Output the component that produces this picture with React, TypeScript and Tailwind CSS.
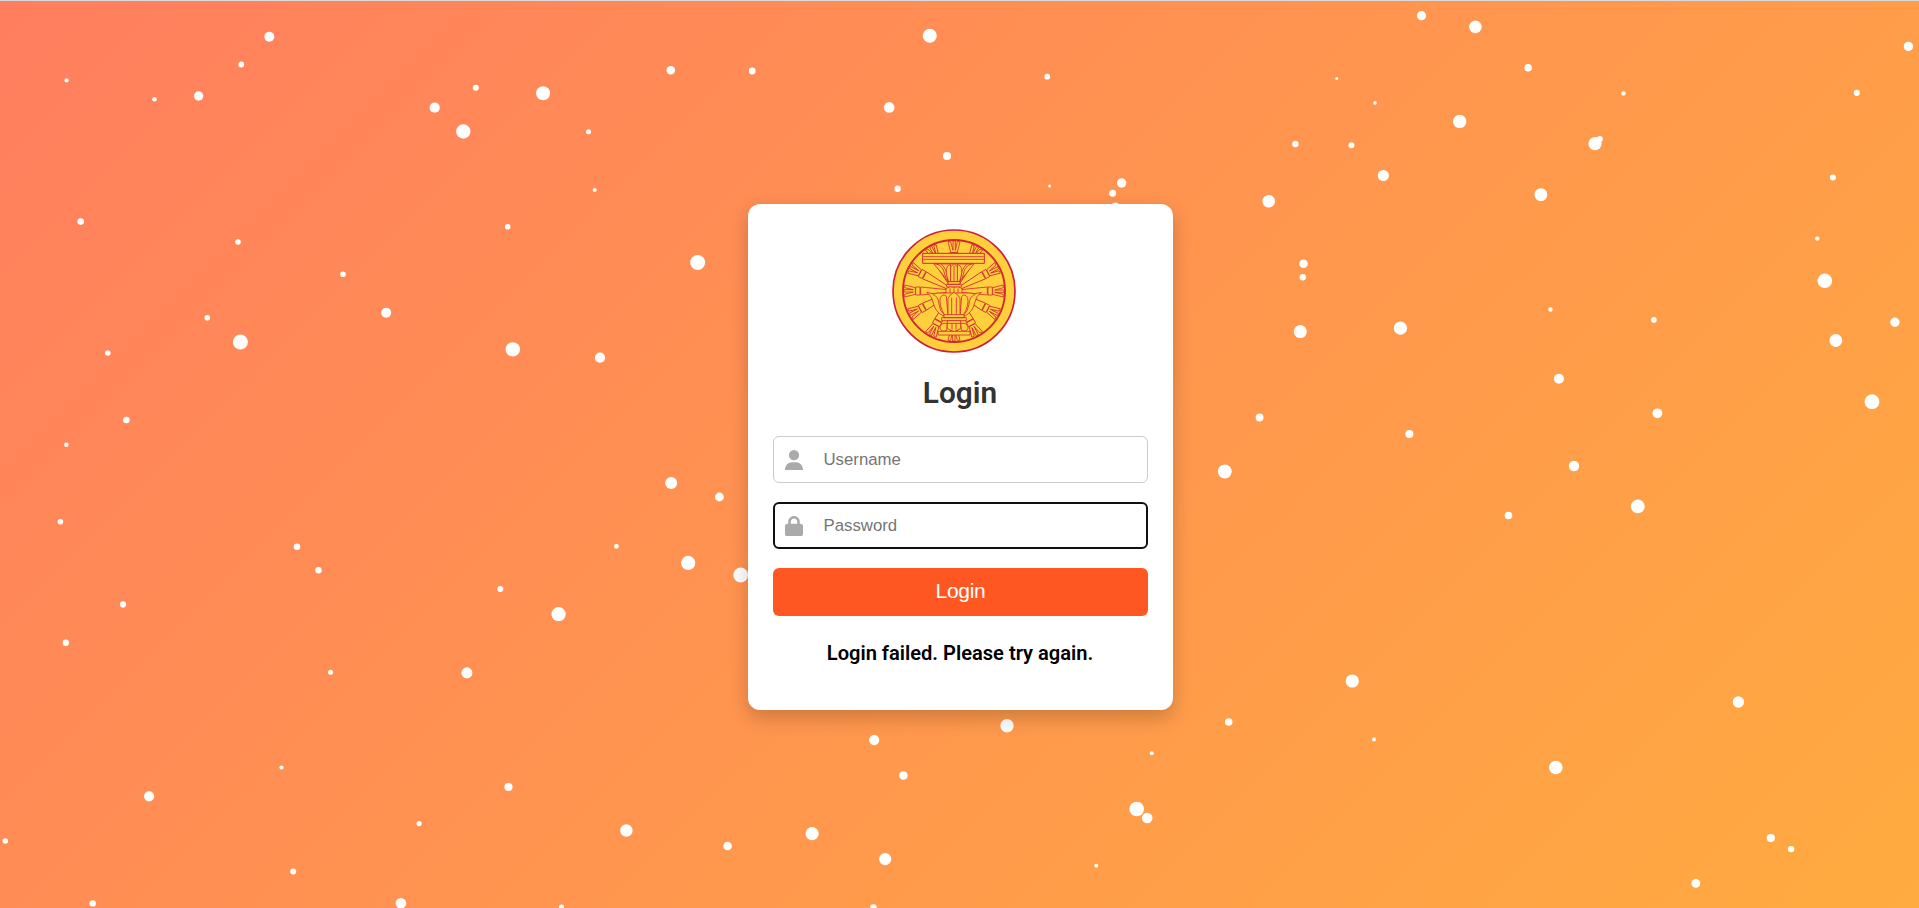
import { FaLock, FaUser } from "react-icons/fa6";

// Each particle is [centre x, centre y, radius].
const PARTICLES: [number, number, number][] = [
  [269.3, 36.7, 5], [241.3, 64.5, 2.9], [66.6, 80.4, 2.1], [154.5, 99.2, 2.3], [198.6, 96, 4.7],
  [475.8, 87.7, 3], [434.7, 107.7, 5.1], [463.3, 131.5, 7.2], [80.7, 221.6, 3.3], [238, 242, 2.8],
  [343, 274.3, 2.8], [386.2, 312.7, 5], [207.3, 317.8, 2.8], [240.4, 342, 7.5], [107.8, 353, 2.8],
  [126.4, 420, 3.3], [66.4, 444.7, 2.2], [929.8, 35.8, 7], [670.8, 70.3, 4.3], [752.2, 71, 3.4],
  [543.1, 93.2, 7], [889.2, 107.4, 5.3], [588.5, 131.8, 2.5], [947, 156, 4.1], [594.7, 190, 2],
  [897.6, 188.7, 3.2], [507.7, 226.8, 2.8], [697.7, 262.5, 7.5], [512.8, 349.4, 7.2], [600, 357.7, 5.1],
  [1421.5, 15.7, 4.6], [1047.2, 76.7, 2.9], [1336.8, 78.5, 1.5], [1375, 102.9, 1.8], [1295.4, 144, 3.2],
  [1351.4, 145.3, 3], [1383.3, 175.5, 5.6], [1121.6, 183, 4.7], [1112.6, 193.2, 3.5], [1049.6, 186, 1.5],
  [1115.4, 207, 4.5], [1268.7, 201.2, 6.3], [1303.5, 263.8, 4.3], [1302.8, 277.3, 3.2], [1300.3, 331.6, 6.5],
  [1400.4, 328.2, 6.6], [1259.6, 417.5, 3.9], [1409.4, 434, 4], [1475.4, 26.9, 6.3], [1528.1, 67.7, 3.8],
  [1908.4, 46.4, 4.7], [1623.5, 93.4, 2.2], [1856.8, 92.8, 3.1], [1459.7, 121.4, 6.7], [1595, 143.6, 6.6],
  [1599.8, 139, 3], [1540.9, 194.6, 6.4], [1832.9, 177.4, 3], [1817.3, 238.6, 2.2], [1824.8, 280.8, 7.3],
  [1550.5, 309.5, 2.2], [1653.9, 319.9, 2.8], [1894.9, 322.2, 4.7], [1835.8, 340.5, 6.4], [1558.9, 378.8, 5],
  [1872, 401.7, 7.4], [1657.4, 413.3, 4.9], [60.4, 521.7, 2.8], [297, 546.8, 3.3], [318.5, 570.2, 3.2],
  [123, 604.4, 3.1], [65.8, 642.7, 3.2], [330.6, 672.3, 2.5], [466.9, 672.8, 5.5], [281.5, 767.5, 2.1],
  [149.1, 796.3, 5.1], [419.1, 823.6, 2.6], [5.3, 841, 2.8], [293.2, 871.4, 3], [92.7, 903.4, 3.2],
  [400.9, 903.2, 5.3], [671.2, 483, 6], [719.4, 497, 4.4], [616.4, 546.4, 2.4], [688.2, 562.9, 7.1],
  [740.7, 575, 7.4], [500.3, 589.1, 3], [558.6, 614.2, 7.1], [874.2, 740.1, 5.1], [903.4, 775.5, 4.3],
  [508.5, 787, 4.1], [626.4, 830.5, 6.2], [727.6, 846, 4.3], [812.1, 833.7, 6.6], [885.2, 859.1, 6.1],
  [561.5, 907, 2.6], [873.4, 907.5, 3.3], [1224.8, 471.5, 6.9], [1352.3, 681, 6.6], [1228.7, 722, 3.8],
  [1007, 725.8, 6.7], [1374, 739.4, 2], [1151.7, 753.3, 2], [1136.7, 809, 7.3], [1147.2, 818, 5.3],
  [1096.3, 865.7, 2], [1574, 466, 5.2], [1637.8, 506.4, 6.9], [1508.5, 515.5, 3.8], [1738.4, 702, 5.7],
  [1555.8, 767.5, 6.8], [1770.8, 838, 4.1], [1791.1, 849.1, 3.2], [1695.8, 883.4, 4.4],
];

const SPOKES = [0, 28, 62, 90, 118, 152, 180, 208, 242, 270, 298, 332];

function Emblem() {
  return (
    <svg
      viewBox="0 0 372 372"
      className="h-[124px] w-[124px]"
      fill="#ffcf3c"
      stroke="#d0262f"
      strokeWidth="2.4"
      strokeLinejoin="round"
    >
      <circle cx="186" cy="186" r="183" stroke="#cf1c3f" strokeWidth="5" />
      <circle cx="186" cy="186" r="153" strokeWidth="5.5" />
      {SPOKES.map((angle) => (
        <g key={angle} transform={`rotate(${angle} 186 186)`}>
          <path d="M206 182 L286 174 V198 L206 190 Z" />
          <path d="M288 174 h13 v24 h-13 Z" />
          <path d="M302 176 L334 168 V176 L308 183 H336 V190 H308 L334 196 V204 L302 196 Z" />
        </g>
      ))}

      {/* upper tray and lotus */}
      <path d="M126 105 L170 158 H202 L246 105 Z" />
      <path d="M134 105 Q154 112 157 132 Q160 150 170 158 H202 Q212 150 215 132 Q218 112 238 105 Z" />
      <path d="M148 106 Q165 118 167 158 M224 106 Q207 118 205 158" fill="none" />
      <path d="M170 158 Q158 128 166 112 L176 106 V158 Z M202 158 Q214 128 206 112 L196 106 V158 Z" />
      <path d="M176 158 V114 L186 104 L196 114 V158 Z M186 110 V158" />
      <path d="M92 73 H277 V103 H92 Z" strokeWidth="3" />
      <path d="M94 83 H275 M94 91 H275" fill="none" />
      <path d="M168 158 H204 V166 H168 Z M164 166 H208 V174 H164 Z" />
      <path d="M162 178 Q175 171 186 175 Q197 171 210 178 V197 H162 Z M174 178 V196 M186 178 V196 M198 178 V196" />

      {/* lower lotus */}
      <path d="M104 190 Q120 200 124 222 Q130 248 152 260 H220 Q242 248 248 222 Q252 200 268 190 Q248 197 232 192 H140 Q124 197 104 190 Z" />
      <path d="M122 196 Q140 202 141 226 Q144 248 158 259 M250 196 Q232 202 231 226 Q228 248 214 259" fill="none" />
      <path d="M158 259 Q140 228 145 206 Q154 192 163 202 L168 259 Z M214 259 Q232 228 227 206 Q218 192 209 202 L204 259 Z" />
      <path d="M168 259 V208 Q174 196 186 190 Q198 196 204 208 V259 Z M179 206 V259 M193 206 V259" />
      <path d="M156 257 H216 V266 H156 Z M149 266 H223 V275 H149 Z" />

      {/* foot */}
      <path d="M166 283 Q142 280 144 300 Q150 310 164 304 Z M206 283 Q230 280 228 300 Q222 310 208 304 Z" />
      <path d="M166 275 H206 V298 Q198 304 186 308 Q174 304 166 298 Z M166 283 H206 M180 283 V302 M192 283 V302" />
      <path d="M138 307 H234 V318 H138 Z" />
    </svg>
  );
}

function Particles() {
  return (
    <svg className="absolute inset-0 h-full w-full" fill="#fff" aria-hidden="true">
      {PARTICLES.map(([x, y, r]) => (
        <circle key={`${x}-${y}`} cx={x} cy={y} r={r} />
      ))}
    </svg>
  );
}

export default function App() {
  return (
    <div className="relative h-[908px] w-full overflow-hidden bg-[linear-gradient(135deg,#ff7e5f,#ffab40)] font-['Roboto',sans-serif]">
      <Particles />
      <div className="absolute inset-x-0 top-0 h-px bg-[#dadada]" />
      <main className="relative flex justify-center pt-[204px] pl-0.5">
        <form
          className="flex h-[506px] w-[425px] flex-col rounded-xl bg-white p-[25px] shadow-[0_8px_20px_rgba(0,0,0,0.2)]"
          onSubmit={(event) => event.preventDefault()}
        >
          <div className="flex justify-center pr-[13px]">
            <Emblem />
          </div>
          <h2 className="mt-5 pr-px text-center text-[29.8px] leading-10 font-semibold text-[#333]">Login</h2>
          <label className="mt-[23px] flex h-[47px] items-center rounded-md border border-[#ccc] pl-[11px]">
            <FaUser className="mt-px h-[20.6px] w-[18px] shrink-0 text-[#aaa]" />
            <input
              type="text"
              placeholder="Username"
              className="ml-[20.5px] min-w-0 flex-1 font-['Liberation_Sans',Arial,sans-serif] text-[16.8px] outline-none placeholder:text-[#757575]"
            />
          </label>
          <label className="mt-[19px] flex h-[47px] items-center rounded-md border-2 border-[#101010] pl-2.5">
            <FaLock className="mt-px h-[20.6px] w-[18px] shrink-0 text-[#aaa]" />
            <input
              type="password"
              placeholder="Password"
              className="ml-[20.5px] min-w-0 flex-1 font-['Liberation_Sans',Arial,sans-serif] text-[16.8px] outline-none placeholder:text-[#757575]"
            />
          </label>
          <button
            type="submit"
            className="mt-[19px] h-12 rounded-md bg-[#ff5722] pb-0.5 font-['Liberation_Sans',Arial,sans-serif] text-[21px] tracking-[-0.3px] text-white"
          >
            Login
          </button>
          <p className="mt-[23px] pr-px text-center text-[20.1px] leading-7 font-semibold text-black">
            Login failed. Please try again.
          </p>
        </form>
      </main>
    </div>
  );
}
